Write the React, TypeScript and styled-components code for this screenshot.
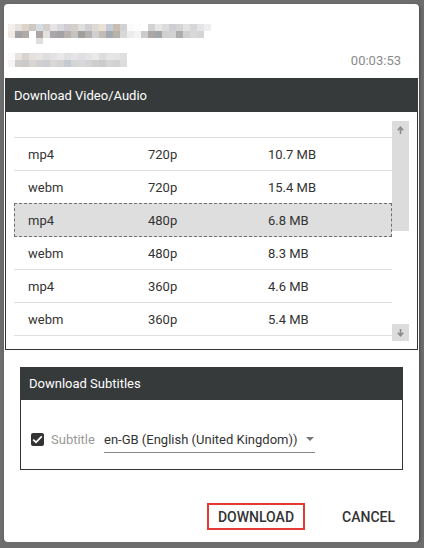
import React from 'react';
import styled, { createGlobalStyle } from 'styled-components';

const GlobalStyle = createGlobalStyle`
  html, body {
    margin: 0;
    padding: 0;
    background: #6d6d6d;
    font-family: Roboto, "Liberation Sans", Arial, sans-serif;
  }
`;

// blurred title / channel (pixelated in the screenshot)
const mosaicTitle = [
  ['#f4efea', '#e6e2df', '#dcd3cb', '#cfc8c1', '#d6dce4', '#d3cfca', '#e6e4e4', '#d9d9dd', '#cfcdd1', '#d4cfc9', '#e0dfe0', '#d0d0d3', '#ddd9d5', '#eae0d5', '#c3ccd7', '#c8bdb0', '#d2d2d5', '#fbfbfb', '#fdfdfd', '#ffffff', '#d2d2d2', '#e6e6e6', '#dcdcdc', '#cfcfd3', '#d4d4d4', '#e2e2e2', '#d6d6d9', '#e5e5e8', '#eeeeee'],
  ['#f1eae4', '#a3a3a6', '#b0aba6', '#ffffff', '#aba6a3', '#e4e0dd', '#aaa7aa', '#a4a2a4', '#b7b2ac', '#c4c2c2', '#a29e9a', '#b3b1b1', '#d2d0ce', '#c2bdb7', '#a4a9b1', '#b9b2a8', '#d8d8d8', '#ececec', '#f3f3f3', '#cbcbcb', '#aba7a3', '#a2a5a9', '#d0d0d0', '#d3d3d3', '#adadad', '#d1d1d1', '#d9d9d9', '#d5d5d5', '#ffffff'],
];

const mosaicChannel = [
  ['#fbfbfb', '#e8e3e0', '#d8d3ce', '#e3e0dd', '#e7e4e3', '#dedee1', '#e3e3e6', '#e9e9e9', '#e1e1e4', '#e5e5e7', '#dfdfe2', '#e4e4e4', '#e9e9e9', '#dddddd', '#e5e5e7', '#e4e4e4', '#dfdfdf'],
  ['#f7f5f3', '#cfccca', '#cbc9c9', '#d9d5d1', '#d0d0d4', '#cdcdd2', '#dad6d2', '#d3d3d3', '#c5cad0', '#d5d5d5', '#d7d8dc', '#d3d3d3', '#cdcdcd', '#cbcbcb', '#d5d5d5', '#d1d1d1', '#dbdddd'],
];

const formats = [
  { type: 'mp4', quality: '720p', size: '10.7 MB' },
  { type: 'webm', quality: '720p', size: '15.4 MB' },
  { type: 'mp4', quality: '480p', size: '6.8 MB', selected: true },
  { type: 'webm', quality: '480p', size: '8.3 MB' },
  { type: 'mp4', quality: '360p', size: '4.6 MB' },
  { type: 'webm', quality: '360p', size: '5.4 MB', last: true },
];

const ArrowUp = () => (
  <svg width="7" height="8" viewBox="0 0 7 8">
    <path d="M3.5 8V1.5M0.8 4.2L3.5 1.2L6.2 4.2" stroke="#8a8a8a" strokeWidth="1.6" fill="none" />
  </svg>
);

const ArrowDown = () => (
  <svg width="7" height="8" viewBox="0 0 7 8">
    <path d="M3.5 0V6.5M0.8 3.8L3.5 6.8L6.2 3.8" stroke="#8a8a8a" strokeWidth="1.6" fill="none" />
  </svg>
);

const Mosaic = ({ rows, tail }: { rows: string[][]; tail?: boolean }) => (
  <MosaicWrap>
    {rows.map((row, i) => (
      <MosaicRow key={i}>
        {row.map((c, j) => (
          <Block key={j} $c={c} />
        ))}
      </MosaicRow>
    ))}
    {tail && (
      <MosaicRow>
        <Block $c="transparent" />
        <Block $c="transparent" />
        <Block $c="transparent" />
        <Block $c="transparent" />
        <Block $c="#dedede" $h={6} />
      </MosaicRow>
    )}
  </MosaicWrap>
);

const App = () => {
  return (
    <>
      <GlobalStyle />
      <Dialog>
        <Head>
          <Mosaic rows={mosaicTitle} tail />
          <HeadBottom>
            <Mosaic rows={mosaicChannel} />
            <Duration>00:03:53</Duration>
          </HeadBottom>
        </Head>

        <Section $inset={1} $top={11}>
          <SectionTitle $h={34}>Download Video/Audio</SectionTitle>
          <VideoBody>
            <List>
              <HeadRow />
              {formats.map((f, i) => (
                <Row
                  key={i}
                  $selected={!!f.selected}
                  $noTop={!!formats[i - 1]?.selected}
                  $last={!!f.last}
                >
                  <TypeCell>{f.type}</TypeCell>
                  <QualityCell>{f.quality}</QualityCell>
                  <SizeCell>{f.size}</SizeCell>
                </Row>
              ))}
            </List>
            <Scrollbar>
              <ScrollBtn>
                <ArrowUp />
              </ScrollBtn>
              <Thumb />
              <Track />
              <ScrollBtn>
                <ArrowDown />
              </ScrollBtn>
            </Scrollbar>
          </VideoBody>
        </Section>

        <Section $inset={16} $top={17}>
          <SectionTitle $h={33}>Download Subtitles</SectionTitle>
          <SubBody>
            <Check>
              <svg width="11" height="9" viewBox="0 0 11 9">
                <path d="M1.2 4.6L4 7.3L9.8 1.4" stroke="#fff" strokeWidth="1.8" fill="none" />
              </svg>
            </Check>
            <SubLabel>Subtitle</SubLabel>
            <Select>
              <span>en-GB (English (United Kingdom))</span>
              <Caret />
            </Select>
          </SubBody>
        </Section>

        <Actions>
          <ActionBtn $outlined>DOWNLOAD</ActionBtn>
          <ActionBtn>CANCEL</ActionBtn>
        </Actions>
      </Dialog>
    </>
  );
};

const Dialog = styled.div`
  box-sizing: border-box;
  margin: 4px 0 0 4px;
  width: 415px;
  height: 538px;
  background: #fff;
  border-radius: 4px;
  box-shadow: 1px 1px 3px rgba(0, 0, 0, 0.35);
  display: flex;
  flex-direction: column;
  overflow: hidden;
`;

const Head = styled.div`
  padding: 20px 18px 0 4px;
  display: flex;
  flex-direction: column;
  gap: 8px;
`;

const HeadBottom = styled.div`
  display: flex;
  justify-content: space-between;
  align-items: flex-end;
`;

const MosaicWrap = styled.div`
  display: flex;
  flex-direction: column;
`;

const MosaicRow = styled.div`
  display: flex;
`;

const Block = styled.span<{ $c: string; $h?: number }>`
  width: 7px;
  height: ${(p) => p.$h ?? 7}px;
  background: ${(p) => p.$c};
`;

const Duration = styled.div`
  font-size: 13px;
  color: #8a8a8a;
  line-height: 15px;
  margin-bottom: -1px;
`;

const Section = styled.div<{ $inset: number; $top: number }>`
  margin: ${(p) => p.$top}px ${(p) => p.$inset}px 0;
  display: flex;
  flex-direction: column;
`;

const SectionTitle = styled.div<{ $h: number }>`
  height: ${(p) => p.$h}px;
  background: #363a3b;
  color: #fff;
  font-size: 13px;
  display: flex;
  align-items: center;
  padding-left: 9px;
`;

const VideoBody = styled.div`
  display: flex;
  height: 237px;
  padding: 0 7px 0 8px;
  border: 1px solid #333;
  border-top: none;
`;

const List = styled.div`
  width: 378px;
  display: flex;
  flex-direction: column;
`;

const HeadRow = styled.div`
  height: 25px;
`;

const Row = styled.div<{ $selected: boolean; $noTop: boolean; $last: boolean }>`
  box-sizing: border-box;
  display: flex;
  align-items: center;
  height: ${(p) => (p.$selected ? 34 : p.$noTop ? 32 : p.$last ? 34 : 33)}px;
  padding-left: ${(p) => (p.$selected ? 13 : 14)}px;
  border-top: ${(p) =>
    p.$selected ? '1px dashed #6f6f6f' : p.$noTop ? 'none' : '1px solid #dedede'};
  border-bottom: ${(p) =>
    p.$selected ? '1px dashed #6f6f6f' : p.$last ? '1px solid #dedede' : 'none'};
  border-left: ${(p) => (p.$selected ? '1px dashed #6f6f6f' : 'none')};
  border-right: ${(p) => (p.$selected ? '1px dashed #6f6f6f' : 'none')};
  background: ${(p) => (p.$selected ? '#dedede' : 'transparent')};
  font-size: 13px;
  color: #333;
`;

const TypeCell = styled.span`
  width: 120px;
`;

const QualityCell = styled.span`
  width: 120px;
`;

const SizeCell = styled.span`
  flex: 1;
`;

const Scrollbar = styled.div`
  width: 17px;
  height: 220px;
  margin-top: 9px;
  display: flex;
  flex-direction: column;
`;

const ScrollBtn = styled.div`
  height: 17px;
  background: #dcdcdc;
  display: flex;
  align-items: center;
  justify-content: center;
`;

const Thumb = styled.div`
  height: 93px;
  background: #dcdcdc;
`;

const Track = styled.div`
  flex: 1;
  background: #fff;
`;

const SubBody = styled.div`
  height: 70px;
  box-sizing: border-box;
  border: 1px solid #333;
  border-top: none;
  padding: 26px 0 0 10px;
  display: flex;
  align-items: flex-start;
`;

const Check = styled.div`
  width: 13px;
  height: 13px;
  margin-top: 7px;
  border-radius: 2px;
  background: #333;
  display: flex;
  align-items: center;
  justify-content: center;
`;

const SubLabel = styled.span`
  margin: 6px 0 0 7px;
  font-size: 13px;
  line-height: 15px;
  color: #999;
  width: 53px;
`;

const Select = styled.div`
  box-sizing: border-box;
  width: 211px;
  height: 27px;
  border-bottom: 1px solid #888;
  display: flex;
  justify-content: space-between;
  align-items: flex-start;
  padding-top: 6px;
  font-size: 13px;
  line-height: 15px;
  color: #333;
`;

const Caret = styled.span`
  width: 0;
  height: 0;
  margin: 5px 1px 0 0;
  border-left: 4px solid transparent;
  border-right: 4px solid transparent;
  border-top: 4px solid #777;
`;

const Actions = styled.div`
  display: flex;
  justify-content: flex-end;
  gap: 27px;
  margin-top: 33px;
  padding-right: 14px;
`;

const ActionBtn = styled.button<{ $outlined?: boolean }>`
  box-sizing: border-box;
  height: 27px;
  padding: 1px ${(p) => (p.$outlined ? 9 : 8)}px 0;
  border: 2px solid ${(p) => (p.$outlined ? '#e53935' : 'transparent')};
  background: transparent;
  font-family: Roboto, "Liberation Sans", Arial, sans-serif;
  font-size: 14px;
  font-weight: 500;
  color: #333;
  cursor: pointer;
`;

export default App;
